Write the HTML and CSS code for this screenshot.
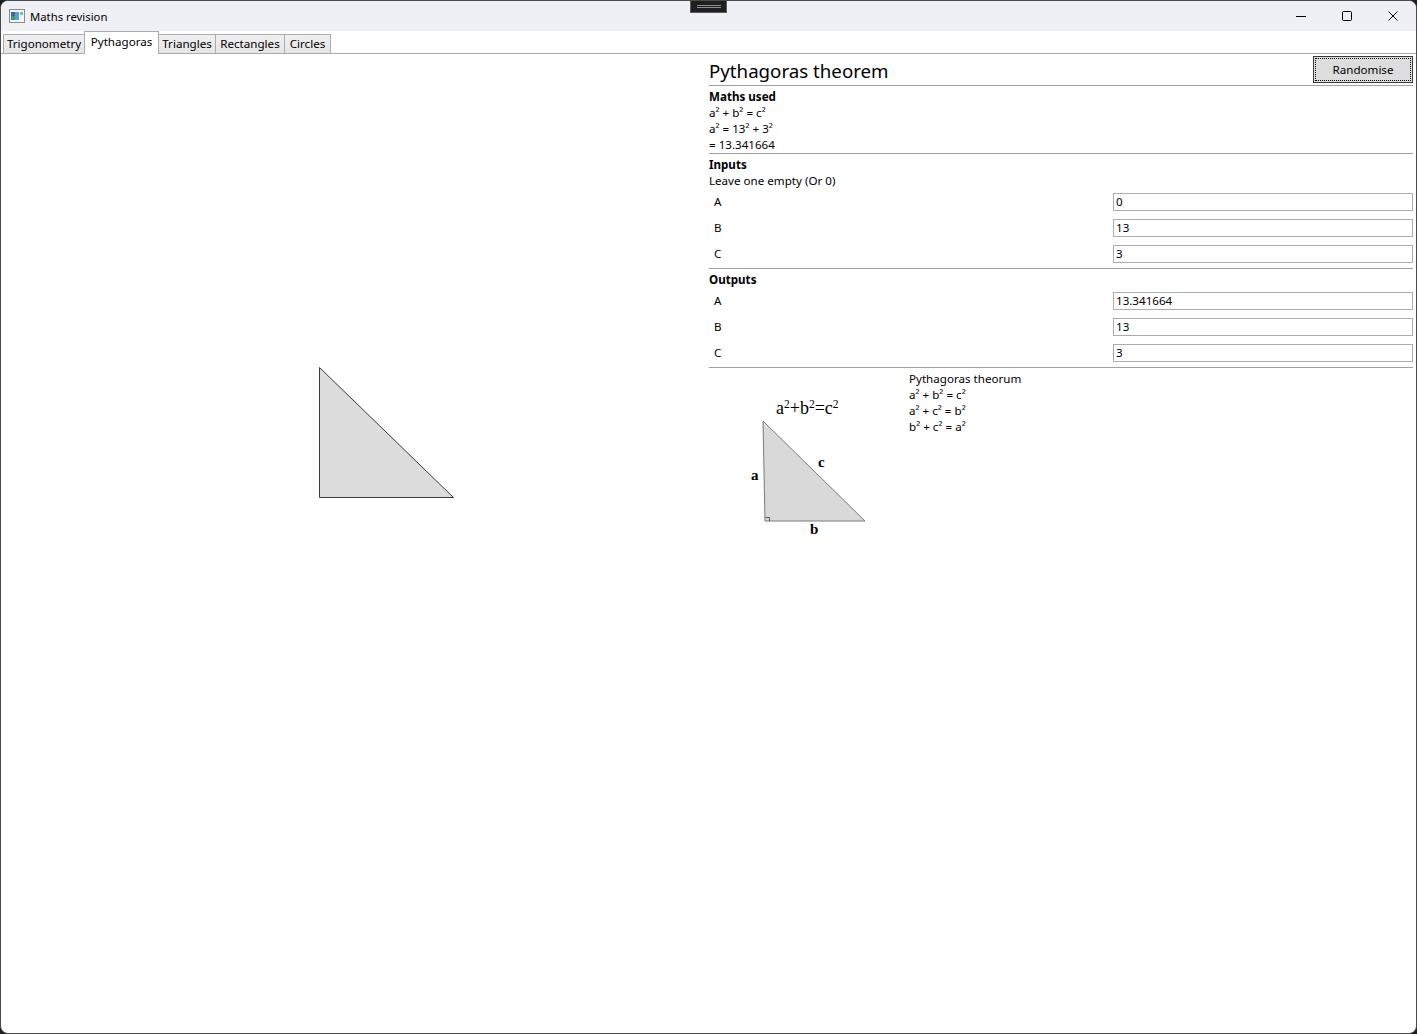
FILE: index.html
```html
<!DOCTYPE html>
<html lang="en">
<head>
<meta charset="utf-8">
<title>Maths revision</title>
<link rel="stylesheet" href="styles.css">
</head>
<body>
<div class="window">
  <header class="titlebar">
    <svg class="app-icon" width="16" height="14" viewBox="0 0 16 14">
      <rect x="0.5" y="0.5" width="15" height="13" fill="#f4f4f4" stroke="#8a8a8a"/>
      <rect x="2" y="3" width="4" height="4" fill="#2f6fa8"/>
      <rect x="2" y="7" width="4" height="4" fill="#3a9a6a"/>
      <rect x="6" y="3" width="4" height="8" fill="#5a9ed6"/>
      <rect x="11" y="3" width="3" height="3" fill="#7fc0a0"/>
    </svg>
    <span class="app-title">Maths revision</span>
    <div class="controls">
      <span class="ctl">
        <svg width="10" height="10" viewBox="0 0 10 10"><line x1="0" y1="5.5" x2="10" y2="5.5" stroke="#000" stroke-width="1"/></svg>
      </span>
      <span class="ctl">
        <svg width="10" height="10" viewBox="0 0 10 10"><rect x="0.5" y="0.5" width="9" height="9" rx="1" fill="none" stroke="#000" stroke-width="1"/></svg>
      </span>
      <span class="ctl">
        <svg width="10" height="10" viewBox="0 0 10 10"><path d="M0.5 0.5 L9.5 9.5 M9.5 0.5 L0.5 9.5" stroke="#000" stroke-width="1"/></svg>
      </span>
    </div>
    <div class="snap-handle"><span></span><span></span></div>
  </header>

  <nav class="tabs">
    <span class="tab tab-trig">Trigonometry</span>
    <span class="tab tab-active">Pythagoras</span>
    <span class="tab tab-tri">Triangles</span>
    <span class="tab tab-rect">Rectangles</span>
    <span class="tab tab-circ">Circles</span>
  </nav>

  <main class="content">
    <section class="canvas">
      <svg class="canvas-svg" width="708" height="978">
        <polygon points="318.5,313.5 318.5,443.5 452.5,443.5" fill="#dcdcdc" stroke="#3a3a3a" stroke-width="1"/>
      </svg>
    </section>

    <section class="panel">
      <div class="panel-head">
        <h1 class="panel-title">Pythagoras theorem</h1>
        <button class="btn">Randomise</button>
      </div>

      <div class="group">
        <div class="group-title">Maths used</div>
        <div class="line">a² + b² = c²</div>
        <div class="line">a² = 13² + 3²</div>
        <div class="line">= 13.341664</div>
      </div>

      <div class="group group-spaced">
        <div class="group-title">Inputs</div>
        <div class="line">Leave one empty (Or 0)</div>
        <div class="field"><span class="field-label">A</span><span class="textbox">0</span></div>
        <div class="field"><span class="field-label">B</span><span class="textbox">13</span></div>
        <div class="field"><span class="field-label">C</span><span class="textbox">3</span></div>
      </div>

      <div class="group group-spaced">
        <div class="group-title">Outputs</div>
        <div class="field"><span class="field-label">A</span><span class="textbox">13.341664</span></div>
        <div class="field"><span class="field-label">B</span><span class="textbox">13</span></div>
        <div class="field"><span class="field-label">C</span><span class="textbox">3</span></div>
      </div>

      <div class="reference">
        <svg class="diagram" width="200" height="180" viewBox="0 0 200 180">
          <text x="67" y="46" class="formula">a<tspan dy="-6" font-size="11.5">2</tspan><tspan dy="6">+b</tspan><tspan dy="-6" font-size="11.5">2</tspan><tspan dy="6">=c</tspan><tspan dy="-6" font-size="11.5">2</tspan></text>
          <polygon points="54,53 56,153 156,153" fill="#d9d9d9" stroke="#7a7a7a" stroke-width="1"/>
          <polyline points="56.5,149.5 60.5,149.5 60.5,153" fill="none" stroke="#555" stroke-width="1"/>
          <text x="42" y="112" class="side">a</text>
          <text x="109" y="99" class="side">c</text>
          <text x="101" y="166" class="side">b</text>
        </svg>
        <div class="reference-text">
          <div class="line">Pythagoras theorum</div>
          <div class="line">a² + b² = c²</div>
          <div class="line">a² + c² = b²</div>
          <div class="line">b² + c² = a²</div>
        </div>
      </div>
    </section>
  </main>
</div>
</body>
</html>
```
FILE: styles.css
```css
* { box-sizing: border-box; }

html, body {
  margin: 0;
  padding: 0;
  background: #1e1e1e;
}

body {
  font-family: "Noto Sans", "Open Sans", sans-serif;
  font-size: 11.6px;
  color: #000;
}

.window {
  position: relative;
  width: 1417px;
  height: 1034px;
  background: #fff;
  border: 1px solid #4a4a4a;
  border-radius: 8px;
  overflow: hidden;
  display: flex;
  flex-direction: column;
}

/* Title bar */
.titlebar {
  height: 30px;
  flex: none;
  background: #eff0f5;
  display: flex;
  align-items: center;
  padding-left: 8px;
}

.app-icon { flex: none; }

.app-title {
  margin-left: 5px;
  font-size: 11.3px;
}

.controls {
  margin-left: auto;
  display: flex;
  height: 100%;
}

.ctl {
  width: 46px;
  height: 100%;
  display: flex;
  align-items: center;
  justify-content: center;
}

.snap-handle {
  position: absolute;
  left: 689px;
  top: -1px;
  width: 37px;
  height: 13px;
  background: #1f1f1f;
  border: 1px solid #5c5c5c;
  border-top: none;
  display: flex;
  flex-direction: column;
  align-items: center;
  justify-content: center;
  gap: 1px;
}

.snap-handle span {
  display: block;
  width: 24px;
  height: 1px;
  background: #8c8c8c;
}

/* Tabs */
.tabs {
  height: 22px;
  flex: none;
  display: flex;
  align-items: flex-end;
  padding-left: 2px;
  position: relative;
  z-index: 1;
}

.tab {
  height: 19px;
  line-height: 18px;
  text-align: center;
  background: linear-gradient(#f0f0f0, #e5e5e5);
  border: 1px solid #acacac;
  border-bottom: none;
  margin-right: -1px;
  white-space: nowrap;
}

.tab-trig { width: 82px; }
.tab-tri { width: 58px; }
.tab-rect { width: 70px; }
.tab-circ { width: 47px; }

.tab-active {
  width: 75px;
  height: 23px;
  margin-bottom: -1px;
  background: #fff;
  line-height: 20px;
  position: relative;
  z-index: 2;
}

/* Content */
.content {
  flex: 1;
  border-top: 1px solid #acacac;
  display: grid;
  grid-template-columns: 708px 1fr;
  min-height: 0;
}

.canvas { position: relative; overflow: hidden; }
.canvas-svg { display: block; }

.panel {
  padding: 2px 3px 0 0;
  display: flex;
  flex-direction: column;
}

.panel-head {
  display: flex;
  justify-content: space-between;
  align-items: flex-start;
  border-bottom: 1px solid #a0a0a0;
  height: 30px;
}

.panel-title {
  margin: 0;
  font-weight: normal;
  font-size: 18.7px;
  line-height: 29px;
}

.btn {
  width: 100px;
  height: 27px;
  font-family: inherit;
  font-size: 11.6px;
  color: #000;
  background: #dddddd;
  border: 1px solid #3a3a3a;
  outline: 1px dotted #000;
  outline-offset: -3px;
  padding: 0;
  margin: 0;
}

.group {
  padding-top: 3px;
  border-bottom: 1px solid #a0a0a0;
}

.group-spaced { padding-bottom: 1px; }

.group-title {
  font-weight: bold;
  line-height: 16px;
}

.line {
  line-height: 16px;
  white-space: nowrap;
}

.field {
  height: 26px;
  display: flex;
  align-items: flex-start;
  justify-content: space-between;
  padding-top: 4px;
}

.field-label {
  padding-left: 5px;
  line-height: 17px;
}

.textbox {
  width: 300px;
  height: 18px;
  border: 1px solid #abadb3;
  padding-left: 2px;
  line-height: 16px;
  background: #fff;
}

.reference {
  display: flex;
  align-items: flex-start;
}

.diagram { display: block; flex: none; }

.formula {
  font-family: "Liberation Serif", "DejaVu Serif", serif;
  font-size: 18px;
  fill: #000;
}

.side {
  font-family: "Liberation Serif", "DejaVu Serif", serif;
  font-size: 15px;
  font-weight: bold;
  fill: #000;
}

.reference-text {
  padding-top: 3px;
}
```
